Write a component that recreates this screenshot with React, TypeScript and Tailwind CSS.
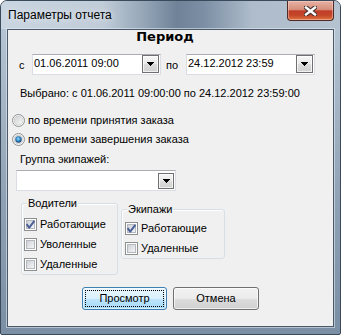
import React from "react";

function Arrow() {
  return (
    <svg width="7" height="4" viewBox="0 0 7 4" shapeRendering="crispEdges">
      <rect x="0" y="0" width="7" height="1" fill="#000" />
      <rect x="1" y="1" width="5" height="1" fill="#000" />
      <rect x="2" y="2" width="3" height="1" fill="#000" />
      <rect x="3" y="3" width="1" height="1" fill="#000" />
    </svg>
  );
}

function DateBox({ value }: { value: string }) {
  return (
    <div className="w-[129px] h-[21px] border border-[#dadde3] border-t-[#abadb3] bg-white flex">
      <div className="flex-1 pl-[1px] pt-[2px] leading-[13px] whitespace-nowrap">{value}</div>
      <div className="w-[17px] h-[18px] mr-[1px] border border-[#707070] bg-[linear-gradient(to_bottom,#f6f6f6,#e9e9e9_50%,#dcdcdc_51%,#d0d0d0)] shadow-[inset_0_0_0_1px_rgba(255,255,255,0.7)] flex items-center justify-center">
        <Arrow />
      </div>
    </div>
  );
}

function Radio({ checked }: { checked?: boolean }) {
  return (
    <svg width="13" height="13" viewBox="0 0 13 13" className="shrink-0">
      <defs>
        <linearGradient id="rg" x1="0" y1="0" x2="1" y2="1">
          <stop offset="0" stopColor="#cfd0d2" />
          <stop offset="1" stopColor="#f8f8f8" />
        </linearGradient>
        <radialGradient id="rb" cx="0.45" cy="0.4" r="0.6">
          <stop offset="0" stopColor="#a8e0fb" />
          <stop offset="0.45" stopColor="#3c98d4" />
          <stop offset="1" stopColor="#163e6c" />
        </radialGradient>
      </defs>
      <circle cx="6.5" cy="6.5" r="6" fill="#fff" stroke="#8e8f8f" strokeWidth="1" />
      <circle cx="6.5" cy="6.5" r="4.5" fill="url(#rg)" stroke="#c4c6c9" strokeWidth="0.8" />
      {checked && <circle cx="6.5" cy="6.5" r="3.2" fill="url(#rb)" />}
    </svg>
  );
}

function Check({ checked }: { checked?: boolean }) {
  return (
    <svg width="13" height="13" viewBox="0 0 13 13" className="shrink-0" shapeRendering="crispEdges">
      <defs>
        <linearGradient id="cg" x1="0" y1="0" x2="1" y2="1">
          <stop offset="0" stopColor="#cbcfd5" />
          <stop offset="1" stopColor="#f7f7f7" />
        </linearGradient>
      </defs>
      <rect x="0.5" y="0.5" width="12" height="12" fill="#fff" stroke="#8e8f8f" />
      <rect x="2.5" y="2.5" width="8" height="8" fill="url(#cg)" stroke="#b3b8bf" />
      {checked && (
        <path
          d="M2.6 6.2 L5.2 9.6 L10.4 2.8"
          fill="none"
          stroke="#4a5f97"
          strokeWidth="2"
          strokeLinejoin="round"
          shapeRendering="geometricPrecision"
        />
      )}
    </svg>
  );
}

function CheckRow({ label, checked, h }: { label: string; checked?: boolean; h: string }) {
  return (
    <div className={`${h} flex items-center gap-[3px]`}>
      <Check checked={checked} />
      <span className="leading-[13px] whitespace-nowrap">{label}</span>
    </div>
  );
}

export default function App() {
  return (
    <div className="w-[341px] h-[335px] bg-white font-['Liberation_Sans',Arial,sans-serif] text-[11px] text-black">
      <div className="w-[341px] h-[335px] border border-[#3b4a5b] rounded-t-[7px] rounded-b-[2px] overflow-hidden flex flex-col bg-[linear-gradient(to_bottom,#bccad7,#8fa1b4_60%,#7a8ea4)]">
        {/* Title bar */}
        <div className="h-[28px] shrink-0 flex items-start justify-between bg-[linear-gradient(to_right,#c9d5e0_0%,#c0ccd8_30%,#95a6b8_42%,#6f8297_52%,#7c8fa4_60%,#aebccb_74%,#b5c2d0_100%)]">
          <div className="pl-[7px] pt-[7px] text-[12px] leading-[14px] whitespace-nowrap [text-shadow:0_0_6px_rgba(255,255,255,0.9)]">
            Параметры отчета
          </div>
          <div className="mr-[6px] w-[47px] h-[20px] rounded-b-[4px] border border-t-0 border-[#4e2b26] bg-[linear-gradient(to_bottom,#e7b2a4,#d78d7b_45%,#c13e28_52%,#c44628_75%,#df7440)] shadow-[inset_0_0_0_1px_rgba(255,220,210,0.45)] flex items-center justify-center">
            <svg width="13" height="10" viewBox="0 0 13 10">
              <path d="M2 1.5 L11 8.5 M11 1.5 L2 8.5" stroke="#45302c" strokeWidth="4.6" strokeLinecap="square" />
              <path d="M2 1.5 L11 8.5 M11 1.5 L2 8.5" stroke="#ffffff" strokeWidth="2.4" strokeLinecap="square" />
            </svg>
          </div>
        </div>

        {/* Client */}
        <div className="px-[6px]">
          <div className="h-[298px] border border-[#4a5869] bg-[#f0f0f0] shadow-[0_0_0_1px_rgba(230,238,245,0.55)] flex flex-col">
            <div className="h-[14px] leading-[14px] text-[13px] font-bold font-['DejaVu_Sans',sans-serif] text-center pr-[11px]">
              Период
            </div>

            <div className="mt-[10px] h-[21px] flex items-start pl-[11px]">
              <span className="w-[13px] mt-[5px] leading-[13px]">с</span>
              <DateBox value="01.06.2011 09:00" />
              <span className="w-[25px] pl-[5px] mt-[5px] leading-[13px]">по</span>
              <DateBox value="24.12.2012 23:59" />
            </div>

            <div className="mt-[12px] pl-[12px] leading-[13px] whitespace-nowrap">
              Выбрано: с 01.06.2011 09:00:00 по 24.12.2012 23:59:00
            </div>

            <div className="mt-[11px] flex flex-col">
              <div className="h-[19px] flex items-center pl-[4px] gap-[3px]">
                <Radio />
                <span className="leading-[13px]">по времени принятия заказа</span>
              </div>
              <div className="h-[19px] flex items-center pl-[4px] gap-[3px]">
                <Radio checked />
                <span className="leading-[13px]">по времени завершения заказа</span>
              </div>
            </div>

            <div className="mt-[4px] pl-[12px] leading-[13px]">Группа экипажей:</div>

            <div className="mt-[4px] ml-[8px] w-[160px] h-[21px] border border-[#dadde3] border-t-[#abadb3] bg-white flex justify-end">
              <div className="mt-[2px] mr-[1px] w-[16px] h-[16px] border border-[#707070] bg-[linear-gradient(to_bottom,#f6f6f6,#e9e9e9_50%,#dcdcdc_51%,#d0d0d0)] shadow-[inset_0_0_0_1px_rgba(255,255,255,0.7)] flex items-center justify-center">
                <Arrow />
              </div>
            </div>

            <div className="mt-[12px] pl-[13px] flex items-start gap-[3px]">
              <div className="relative w-[97px] h-[72px] border border-[#d5dfe5] rounded-[3px] shadow-[inset_1px_1px_0_#ffffff] pt-[10px] pl-[2px]">
                <span className="absolute -top-[7px] left-[5px] px-[1px] bg-[#f0f0f0] leading-[13px]">Водители</span>
                <CheckRow label="Работающие" checked h="h-[20px]" />
                <CheckRow label="Уволенные" h="h-[20px]" />
                <CheckRow label="Удаленные" h="h-[20px]" />
              </div>
              <div className="relative mt-[6px] w-[104px] h-[50px] border border-[#d5dfe5] rounded-[3px] shadow-[inset_1px_1px_0_#ffffff] pt-[8px] pl-[3px]">
                <span className="absolute -top-[7px] left-[5px] px-[1px] bg-[#f0f0f0] leading-[13px]">Экипажи</span>
                <CheckRow label="Работающие" checked h="h-[20px]" />
                <CheckRow label="Удаленные" h="h-[20px]" />
              </div>
            </div>

            <div className="mt-[12px] pl-[74px] flex gap-[6px]">
              <button className="relative w-[85px] h-[23px] rounded-[3px] border border-[#3c7fb1] bg-[linear-gradient(to_bottom,#eaf6fd,#d9f0fc_50%,#bee6fd_51%,#a7d9f5)] shadow-[inset_0_0_0_1px_rgba(255,255,255,0.6)] flex items-center justify-center leading-[13px] text-[11px]">
                <span className="absolute inset-[2px] border border-dotted border-black" />
                Просмотр
              </button>
              <button className="w-[86px] h-[23px] rounded-[3px] border border-[#707070] bg-[linear-gradient(to_bottom,#f2f2f2,#ebebeb_50%,#dddddd_51%,#cfcfcf)] shadow-[inset_0_0_0_1px_rgba(255,255,255,0.7)] flex items-center justify-center leading-[13px] text-[11px]">
                Отмена
              </button>
            </div>
          </div>
        </div>
      </div>
    </div>
  );
}
